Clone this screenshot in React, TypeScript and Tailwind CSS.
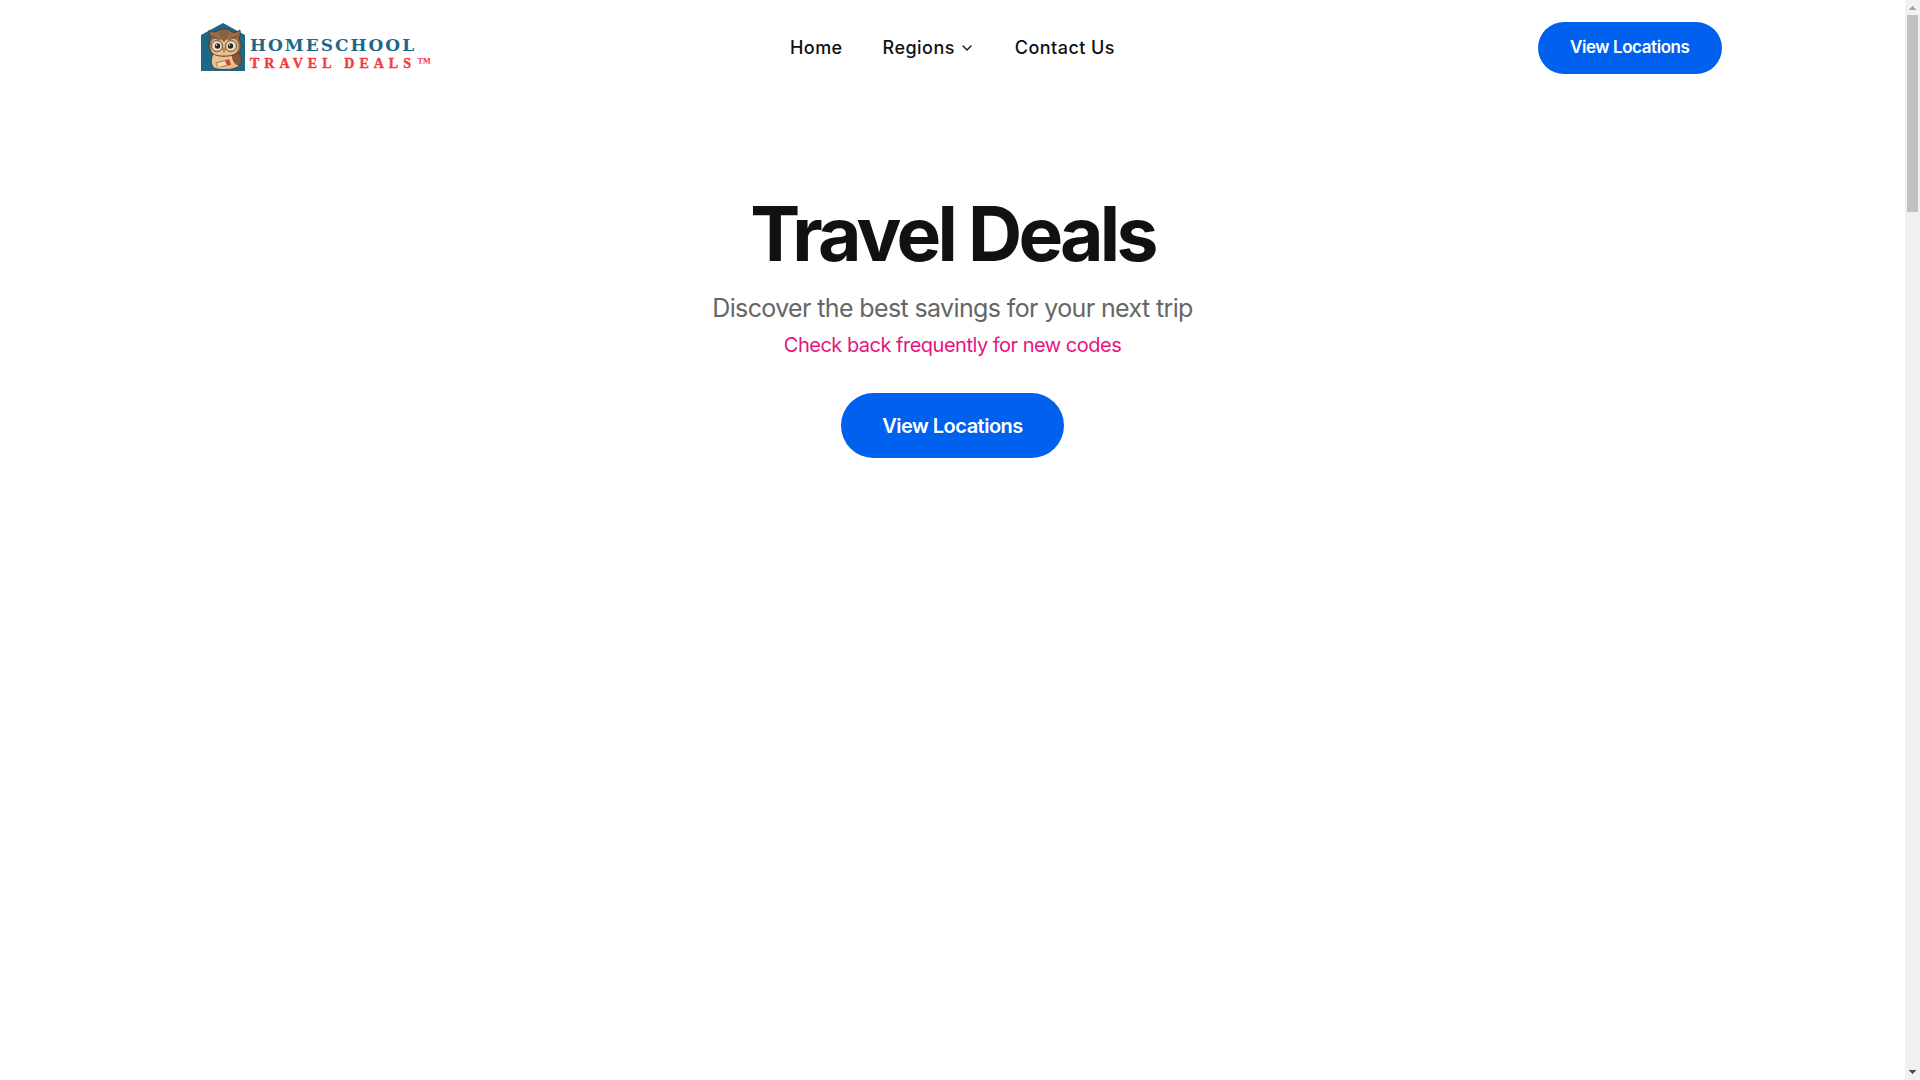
import { ChevronDown } from "lucide-react";

const OWL_LINE = "#4a3122";

function OwlMark(): React.ReactElement {
	return (
		<g>
			<path d="M0 12 L22 0 L44 12 V48 H0 Z" fill="#1d6888" />
			{/* body with the wing folded on the right */}
			<path
				d="M13 29 C10 34 9 41 13 45 C19 47 29 47 34 45 C41 43 43 36 36 28 Z"
				fill="#e9c193"
				stroke={OWL_LINE}
				strokeWidth="0.8"
			/>
			<path d="M31 30 C31 37 34 43 39 42 C42 38 40 32 36 28 Z" fill="#85583a" stroke={OWL_LINE} strokeWidth="0.5" />
			{/* head with ear tufts */}
			<path
				d="M8 7 C11 10 15 9 18 7 C22 5 28 6 31 9 C34 10 36 9 39 7 C40 11 38 14 38 16 C42 23 40 29 35 31 C28 34 18 34 12 31 C7 27 7 20 10 15 C8 12 8 10 8 7 Z"
				fill="#966b49"
				stroke={OWL_LINE}
				strokeWidth="0.8"
			/>
			<path
				d="M11 18 C14 14 19 15 23 19 C26 15 33 14 36 18 C39 23 37 29 33 31 C28 33 18 33 13 31 C9 28 9 22 11 18 Z"
				fill="#e8bf92"
			/>
			<path d="M17 9 L23 19 L29 9 C25 6 20 6 17 9 Z" fill="#8b603f" />
			<path d="M10 13 L19 17 M37 13 L27 17" stroke="#6f482e" strokeWidth="1" />
			<g stroke="#775b42" strokeWidth="0.9" fill="#d4ad82">
				<circle cx="16" cy="23" r="5.8" />
				<circle cx="30" cy="23" r="5.8" />
			</g>
			<circle cx="16" cy="23" r="4" fill="#efeae3" />
			<circle cx="30" cy="23" r="4" fill="#efeae3" />
			<circle cx="16.5" cy="23" r="2.7" fill="#29272b" />
			<circle cx="29.5" cy="23" r="2.7" fill="#29272b" />
			<circle cx="15.5" cy="22" r="0.8" fill="#fff" />
			<circle cx="28.5" cy="22" r="0.8" fill="#fff" />
			<path d="M21 25 H25 L23 29.5 Z" fill="#d28a3b" stroke="#8b5428" strokeWidth="0.4" />
			{/* rolled map and feet */}
			<path d="M15 40 L26 37 L29 42 L17 44 Z" fill="#f3dfc3" stroke="#7b5338" strokeWidth="0.7" />
			<path d="M24 38 L28 36 L30 42 L26 42 Z" fill="#c7452e" />
			<path d="M15 44 H20 M28 43 H34" stroke="#e7b883" strokeWidth="2" strokeLinecap="round" />
		</g>
	);
}

function Logo(): React.ReactElement {
	return (
		<svg width="232" height="50" viewBox="0 0 232 50" role="img" aria-label="Homeschool Travel Deals">
			<g transform="translate(1 0)">
				<OwlMark />
			</g>
			<g fontWeight="700">
				<text x="50" y="28" fill="#1d6888" fontSize="17" letterSpacing="2" fontFamily="DejaVu Serif, serif">
					HOMESCHOOL
				</text>
				<text
					x="50"
					y="45"
					fill="#f23c3f"
					stroke="#f23c3f"
					strokeWidth="0.4"
					fontSize="14"
					letterSpacing="5"
					fontFamily="Liberation Serif, serif"
				>
					TRAVEL DEALS
				</text>
				<text x="217" y="44" fill="#f23c3f" fontSize="14" fontFamily="Liberation Serif, serif">
					™
				</text>
			</g>
		</svg>
	);
}

function Header(): React.ReactElement {
	return (
		<header className="mx-auto grid h-24 w-full max-w-[1570px] grid-cols-[1fr_auto_1fr] items-center px-4">
			<a href="#home" className="justify-self-start pl-4">
				<Logo />
			</a>
			<nav className="flex items-center gap-10 text-lg font-medium tracking-wide">
				<a href="#home">Home</a>
				<button type="button" className="flex items-center gap-1">
					Regions
					<ChevronDown className="size-4" strokeWidth={2} />
				</button>
				<a href="#contact">Contact Us</a>
			</nav>
			<a
				href="#locations"
				className="flex h-[52px] items-center justify-self-end rounded-full bg-[#0061ef] px-8 text-[17px] font-semibold tracking-tight text-white"
			>
				View Locations
			</a>
		</header>
	);
}

function Hero(): React.ReactElement {
	return (
		<section className="flex flex-col items-center px-4 pt-24 text-center">
			<h1 className="text-[75px] leading-[84px] font-bold tracking-tighter">Travel Deals</h1>
			<p className="mt-4 text-[25px] leading-8 tracking-tight text-[#666]">
				Discover the best savings for your next trip
			</p>
			<p className="mt-2 text-xl leading-[26px] tracking-tight text-[#e6127f]">Check back frequently for new codes</p>
			<a
				href="#locations"
				className="mt-[35px] flex h-[65px] items-center rounded-full bg-[#0061ef] px-[41px] text-xl font-semibold tracking-tight text-white"
			>
				View Locations
			</a>
		</section>
	);
}

function Scrollbar(): React.ReactElement {
	return (
		<div
			aria-hidden="true"
			className="sticky top-0 flex h-screen w-[15px] shrink-0 flex-col items-center justify-between bg-[#f1f1f1]"
		>
			<div className="flex w-full flex-col items-center">
				<svg width="15" height="15" viewBox="0 0 15 15" fill="#a3a3a3">
					<path d="M7 6h1v1h1v1h1v1h1v1H4V9h1V8h1V7h1z" />
				</svg>
				<div className="h-[197px] w-[11px] bg-[#c1c1c1]" />
			</div>
			<svg width="15" height="15" viewBox="0 0 15 15" fill="#505050">
				<path d="M4 5h7v1h-1v1H9v1H8v1H7V8H6V7H5V6H4z" />
			</svg>
		</div>
	);
}

export default function App(): React.ReactElement {
	return (
		<div className="flex min-h-screen bg-white font-['Inter',sans-serif] text-[#111]">
			<div className="min-w-0 flex-1">
				<Header />
				<main>
					<Hero />
				</main>
			</div>
			<Scrollbar />
		</div>
	);
}
